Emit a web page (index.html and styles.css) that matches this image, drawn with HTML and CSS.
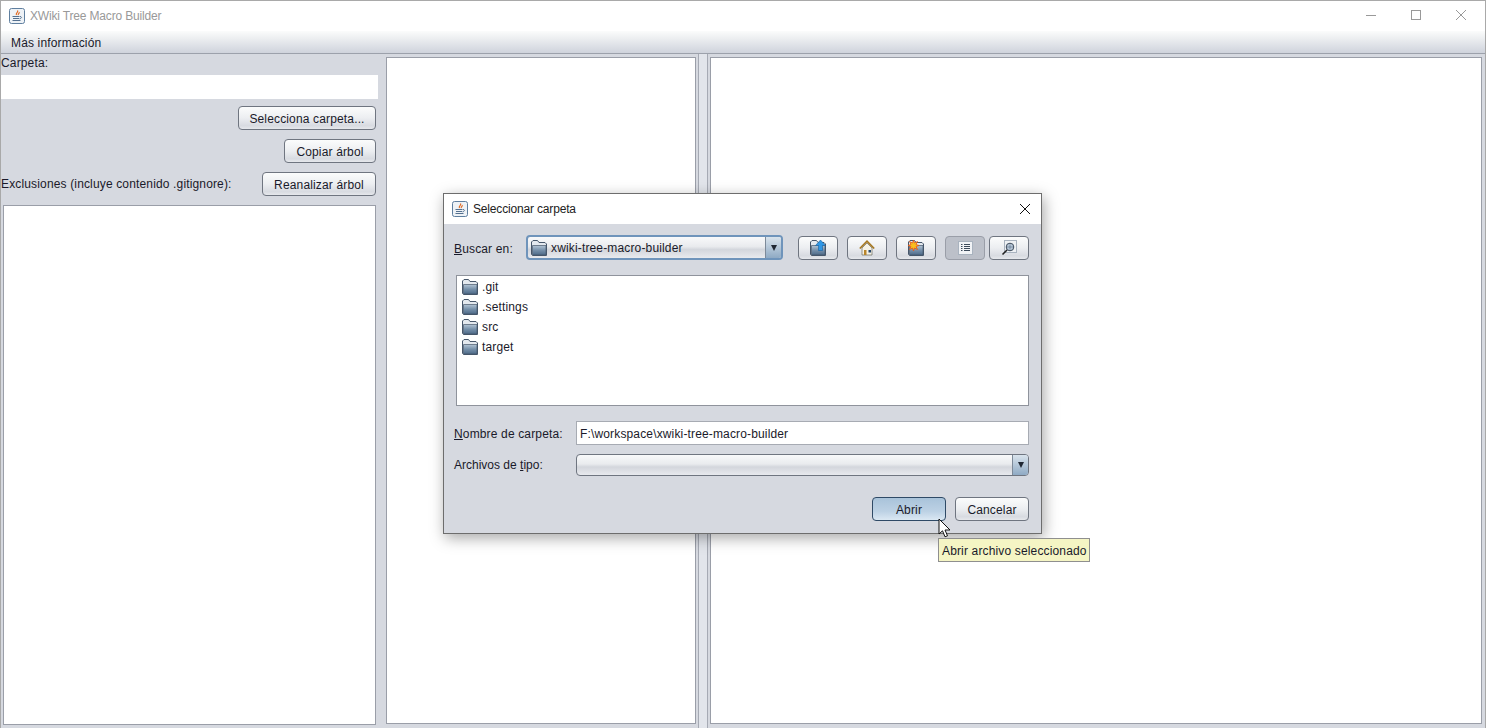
FILE: index.html
```html
<!DOCTYPE html>
<html lang="es">
<head>
<meta charset="utf-8">
<title>XWiki Tree Macro Builder</title>
<link rel="stylesheet" href="styles.css">
</head>
<body>
<svg class="defs" width="0" height="0" aria-hidden="true">
  <defs>
    <linearGradient id="fold" x1="0" y1="0" x2="0" y2="1"><stop offset="0" stop-color="#b4c5d5"/><stop offset=".5" stop-color="#7690aa"/><stop offset="1" stop-color="#4d6a88"/></linearGradient>
    <symbol id="java" viewBox="0 0 16 16">
      <rect x="0.5" y="0.5" width="15" height="15" rx="2" fill="#eef2f6" stroke="#5f7f9f"/>
      <path d="M8.500 2.500c1.500 1.500-2.500 2.600-1 4.500M10 4.200c1 1-1.500 1.700-.6 2.800" fill="none" stroke="#e0661c" stroke-width="1.200"/>
      <path d="M3.500 8.500h7M4 10.500h6M3.500 12.500h8M11 8.500c2 0 2 2-.5 2.300" fill="none" stroke="#54708f"/>
    </symbol>
    <symbol id="folder" viewBox="0 0 16 16">
      <path d="M.5 14.500V2L2 .5h4.500L8 2.500h6l1.500 1.500v11.500H1.500z" fill="#e4e9ef" stroke="#46566a"/>
      <path d="M1.500 15V5.500h13.500V15z" fill="url(#fold)" stroke="#46566a" stroke-width=".7"/>
    </symbol>
  </defs>
</svg>
<div class="window">
  <header class="titlebar">
    <svg class="appicon"><use href="#java"/></svg>
    <span class="title-text">XWiki Tree Macro Builder</span>
    <span class="win-controls">
      <svg width="12" height="12" viewBox="0 0 12 12"><path d="M1 6.500h10" stroke="#999"/></svg>
      <svg width="12" height="12" viewBox="0 0 12 12"><rect x="1.500" y="1.500" width="9" height="9" fill="none" stroke="#999"/></svg>
      <svg width="12" height="12" viewBox="0 0 12 12"><path d="M1 1l10 10M11 1L1 11" stroke="#999"/></svg>
    </span>
  </header>
  <nav class="menubar"><span>Más información</span></nav>
  <main class="workspace">
    <section class="left-pane">
      <label class="folder-label">Carpeta:</label>
      <div class="path-field"></div>
      <div class="action-row"><button class="btn btn-select">Selecciona carpeta...</button></div>
      <div class="action-row"><button class="btn btn-copy">Copiar árbol</button></div>
      <div class="action-row split">
        <span class="excl-label">Exclusiones (incluye contenido .gitignore):</span>
        <button class="btn btn-reanalyze">Reanalizar árbol</button>
      </div>
      <div class="box exclusions"></div>
    </section>
    <section class="box middle-pane"></section>
    <div class="divider"></div>
    <section class="box right-pane"></section>
  </main>
</div>

<div class="dialog">
  <header class="dialog-title">
    <svg class="appicon"><use href="#java"/></svg>
    <span class="dialog-title-text">Seleccionar carpeta</span>
    <svg class="dialog-close" width="12" height="12" viewBox="0 0 12 12"><path d="M1 1l10 10M11 1L1 11" stroke="#111"/></svg>
  </header>
  <div class="dialog-body">
    <div class="look-row">
      <label class="look-label"><u>B</u>uscar en:</label>
      <div class="combo combo-focus">
        <span class="combo-value"><svg class="ficon"><use href="#folder"/></svg>xwiki-tree-macro-builder</span>
        <span class="combo-arrow"><i></i></span>
      </div>
      <div class="tools">
        <button class="tool">
          <svg width="16" height="16" viewBox="0 0 16 16"><use href="#folder"/><path d="M10.500 0L15.500 5.500h-3v5h-4v-5h-3z" fill="#2f97e6" stroke="#1a5f9e" stroke-width=".6"/></svg>
        </button>
        <button class="tool">
          <svg width="16" height="16" viewBox="0 0 16 16"><path d="M3 8v7h10V8L8 3z" fill="#f6f2e6" stroke="#6a6a5c" stroke-width=".7"/><path d="M.8 8.500L8 1.200l7.200 7.300" fill="none" stroke="#a5761f" stroke-width="1.700"/><rect x="5" y="10" width="2.500" height="5" fill="#b9862c"/><rect x="9.500" y="10" width="2.500" height="2.500" fill="#27496d"/></svg>
        </button>
        <button class="tool">
          <svg width="16" height="16" viewBox="0 0 16 16"><use href="#folder"/><path d="M5.500 0l1 3L9.500 1.500 8 4.500l3 1-3 1L9.500 9.500l-3-1.500-1 3-1-3-3 1.500L3 6.500l-3-1 3-1L1.500 1.500l3 1.500z" fill="#f9bd1f" stroke="#e2531c" stroke-width=".8"/></svg>
        </button>
        <button class="tool tool-on">
          <svg width="15" height="14" viewBox="0 0 15 14"><rect x=".5" y=".5" width="14" height="13" fill="#f1f3f6" stroke="#a9b3bf"/><path d="M3 3.500h1.500M6 3.500h6M3 5.500h1.500M6 5.500h6M3 7.500h1.500M6 7.500h6M3 9.500h1.500M6 9.500h6" stroke="#3c4a5a"/></svg>
        </button>
        <button class="tool">
          <svg width="16" height="16" viewBox="0 0 16 16"><rect x="3.500" y=".5" width="12" height="12" fill="#eef1f4" stroke="#a9b3bf"/><circle cx="9" cy="7" r="3.800" fill="#b9c9da" stroke="#3c4a5a"/><path d="M6 7h6M9 4.500v5" stroke="#62778d" stroke-width=".7"/><path d="M6 10l-4.500 4.500" stroke="#222" stroke-width="1.600"/></svg>
        </button>
      </div>
    </div>
    <ul class="file-list">
      <li><svg class="ficon"><use href="#folder"/></svg>.git</li>
      <li><svg class="ficon"><use href="#folder"/></svg>.settings</li>
      <li><svg class="ficon"><use href="#folder"/></svg>src</li>
      <li><svg class="ficon"><use href="#folder"/></svg>target</li>
    </ul>
    <div class="form-row name-row">
      <label class="form-label"><u>N</u>ombre de carpeta:</label>
      <div class="name-field">F:\workspace\xwiki-tree-macro-builder</div>
    </div>
    <div class="form-row type-row">
      <label class="form-label"><span class="tight">Archivos de <u>t</u>ipo:</span></label>
      <div class="combo combo-wide"><span class="combo-value"></span><span class="combo-arrow"><i></i></span></div>
    </div>
    <div class="dialog-actions">
      <button class="btn dlg-btn btn-hover">Abrir</button>
      <button class="btn dlg-btn">Cancelar</button>
    </div>
  </div>
</div>

<div class="tooltip">Abrir archivo seleccionado</div>
<svg class="cursor" width="13" height="21" viewBox="0 0 13 21"><path d="M1 1v15l3.500-3.200 2.500 6 2.500-1-2.500-5.800H12z" fill="#fff" stroke="#111"/></svg>
</body>
</html>
```
FILE: styles.css
```css
* { box-sizing: border-box; }
html, body { margin: 0; height: 728px; overflow: hidden; }
body {
  position: relative;
  font: 12px "Liberation Sans", Arial, sans-serif;
  letter-spacing: .15px;
  color: #1a1a2a;
  background: #d6d9e0;
}
.defs { position: absolute; }
.window {
  height: 728px;
  display: flex;
  flex-direction: column;
  border: 1px solid #a9a9a9;
  border-bottom: 0;
}
.titlebar {
  height: 30px;
  flex: none;
  background: #fff;
  display: flex;
  align-items: center;
  padding-left: 8px;
}
.appicon { width: 16px; height: 16px; flex: none; }
.title-text { margin-left: 5px; color: #999; letter-spacing: -.17px; }
.win-controls {
  margin-left: auto;
  display: flex;
  gap: 33px;
  padding-right: 18px;
  margin-top: -2px;
}
.menubar {
  height: 23px;
  flex: none;
  padding: 5px 0 0 10px;
  background: linear-gradient(#fbfcfc, #eef0f2 30%, #cfd3dc);
  border-bottom: 1px solid #9ca1ab;
}
.workspace {
  flex: 1;
  min-height: 0;
  display: flex;
  align-items: flex-start;
  padding: 3px 3px 0 0;
}
.box {
  background: #fff;
  border: 1px solid #9a9ea8;
}
.left-pane { width: 377px; flex: none; height: 672px; }
.folder-label { display: block; height: 18px; line-height: 12px; padding-top: 1px; margin-top: -1px; margin-bottom: 1px; }
.path-field { height: 24px; background: #fff; }
.action-row { height: 33px; display: flex; justify-content: flex-end; align-items: flex-start; padding: 7px 2px 0 0; }
.action-row.split { justify-content: space-between; }
.excl-label { line-height: 24px; }
.btn {
  height: 24px;
  padding: 1px 0 0;
  font: inherit;
  letter-spacing: inherit;
  color: #1a1a2a;
  border: 1px solid #6f7580;
  border-radius: 4px;
  background: linear-gradient(#fbfcfc, #eceef1 50%, #d8dbe1 85%, #e6e8ec);
}
.btn-select { width: 138px; }
.btn-copy { width: 92px; }
.btn-reanalyze { width: 114px; }
.exclusions { margin: 7px 2px 0 2px; height: 520px; }
.middle-pane { width: 310px; height: 667px; margin-left: 8px; flex: none; }
.divider {
  width: 10px;
  height: 674px;
  flex: none;
  margin: -3px 2px 0 2px;
  background: #e2e5eb;
  border-left: 1px solid #a6aab4;
  border-right: 1px solid #a6aab4;
}
.right-pane { flex: 1; height: 667px; }

/* dialog sits over the main window */
.dialog {
  position: absolute;
  left: 443px;
  top: 193px;
  width: 599px;
  height: 341px;
  display: flex;
  flex-direction: column;
  border: 1px solid #6d6d6d;
  background: #d6d9e0;
  box-shadow: 2px 4px 14px rgba(0, 0, 0, .35);
}
.dialog-title {
  height: 30px;
  flex: none;
  background: #fff;
  display: flex;
  align-items: center;
  padding-left: 8px;
}
.dialog-title-text { margin-left: 5px; color: #222; letter-spacing: -.17px; }
.dialog-close { margin-left: auto; margin-right: 10px; }
.dialog-body { padding: 12px 12px 0 10px; flex: 1; display: flex; flex-direction: column; }
.look-row { display: flex; align-items: center; height: 24px; }
.look-label { width: 72px; flex: none; padding-top: 1px; }
.combo {
  display: flex;
  height: 24px;
  border: 1px solid #6f7580;
  border-radius: 4px;
  background: linear-gradient(#f8f9fa, #e9ebee 45%, #d3d6dc 60%, #e8eaee);
  overflow: hidden;
}
.combo-focus { width: 257px; height: 25px; margin-top: -1px; flex: none; border: 2px solid #6f94bb; }
.combo-value { flex: 1; display: flex; align-items: center; padding-left: 3px; padding-top: 1px; color: #1a1a2a; }
.combo-value .ficon { margin-right: 4px; }
.combo-arrow {
  width: 16px;
  flex: none;
  background: linear-gradient(#d9e3ec, #8faac4);
  border-left: 1px solid #7d8a99;
  display: flex;
  align-items: center;
  justify-content: center;
}
.combo-arrow i {
  width: 0;
  height: 0;
  border-left: 3.500px solid transparent;
  border-right: 3.500px solid transparent;
  border-top: 6px solid #1f2733;
}
.tools { display: flex; gap: 9px; margin-left: 15px; }
.tools .tool:last-child { margin-left: -5px; }
.tool {
  width: 40px;
  height: 24px;
  padding: 0;
  display: flex;
  align-items: center;
  justify-content: center;
  border: 1px solid #6f7580;
  border-radius: 4px;
  background: linear-gradient(#fbfcfc, #eceef1 50%, #d8dbe1 85%, #e6e8ec);
}
.tool-on { background: #bcc0c9; border-color: #9a9ea8; }
.ficon { width: 16px; height: 16px; flex: none; }
.file-list {
  list-style: none;
  margin: 15px 0 0 2px;
  padding: 1px 0 0 5px;
  height: 131px;
  background: #fff;
  border: 1px solid #8f939c;
}
.file-list li { height: 20px; display: flex; align-items: center; gap: 4px; color: #1a1a2a; padding-bottom: 1px; }
.form-row { display: flex; align-items: center; }
.form-label { width: 122px; flex: none; }
.tight { letter-spacing: 0; }
.name-row { margin-top: 15px; height: 24px; }
.name-row .form-label { padding-top: 1px; }
.name-field {
  flex: 1;
  height: 24px;
  line-height: 24px;
  padding-left: 3px;
  background: #fff;
  border: 1px solid #a7abb3;
}
.type-row { margin-top: 9px; height: 22px; }
.combo-wide { flex: 1; height: 22px; }
.dialog-actions { display: flex; justify-content: flex-end; gap: 9px; margin-top: 21px; }
.dlg-btn { height: 24px; width: 74px; }
.btn-hover {
  border-color: #2f4a66;
  background: linear-gradient(#a9c3da, #bcd1e4 60%, #dbe8f3);
}

.tooltip {
  position: absolute;
  left: 938px;
  top: 538px;
  width: 152px;
  height: 24px;
  line-height: 24px;
  padding-left: 3px;
  white-space: nowrap;
  background: #f5f5c4;
  border: 1px solid #8f8f8f;
}
.cursor { position: absolute; left: 938px; top: 518px; }
```
